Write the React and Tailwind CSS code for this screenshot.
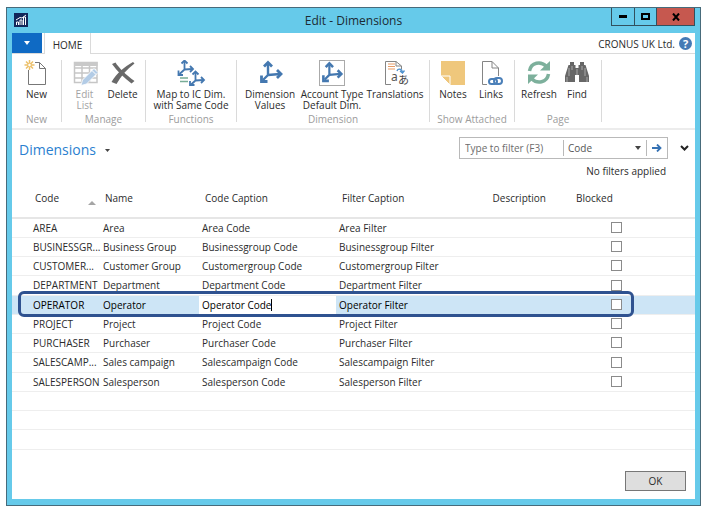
import React from "react";

function Axes({ x = 0, y = 0, scale = 1 }) {
  return (
    <g transform={`translate(${x} ${y}) scale(${scale})`} fill="none" stroke="#4478b0">
      <path d="M8 14V2M8 14L20 13M8 14L3 19" strokeWidth="2.4" />
      <path d="M4 5.500L8 1.500L12 5.500M17 9L21 13L17 17M1.500 14.500V20.500H7.500" strokeWidth="2.8" />
    </g>
  );
}

function Icon({ children, w = 26 }) {
  return (
    <svg width={w} height="26" viewBox={`0 0 ${w} 26`} aria-hidden="true" className="block shrink-0">
      {children}
    </svg>
  );
}

const icons = {
  new: (
    <Icon>
      <path d="M4.500 10V24.500H21.500V8.500L15.500 2.500H11" fill="none" stroke="#777" />
      <path d="M15.500 2.500V8.500H21.500" fill="none" stroke="#777" />
      <path d="M5.500 0V10M.5 5H10.500M2 1.500L9 8.500M9 1.500L2 8.500" stroke="#ecc069" strokeWidth="1.500" />
      <circle cx="5.500" cy="5" r="1.800" fill="#fff" stroke="#ecc069" />
    </Icon>
  ),
  edit: (
    <Icon>
      <path d="M2.500 2.500H25V22.500H2.500ZM2.500 8H25M2.500 13H25M2.500 18H25M10 6V22.500M17.500 6V22.500" fill="none" stroke="#c6c6c6" strokeWidth="1.500" />
      <path d="M2 2H25.500V6H2Z" fill="#c9c9c9" />
      <path d="M9 25.500L10.500 20L22 8.500L26 12.500L14.500 24Z" fill="#b3cce6" stroke="#fff" strokeWidth=".8" />
      <path d="M20 10.500L24 14.500" stroke="#fff" />
    </Icon>
  ),
  delete: (
    <Icon>
      <path d="M2 4L5.500 2.500C9 8 16 15 24.500 21L21.500 23.500C14 18 7 11 2 4Z" fill="#696969" />
      <path d="M23 2L24.500 3.500C17 9 11 16 6.500 24L1.500 22C7 13 14 7 23 2Z" fill="#696969" />
    </Icon>
  ),
  map: (
    <Icon w={32}>
      <g fill="none" stroke="#4478b0" strokeWidth="1.800">
        <path d="M9.500 9.500V1M9.500 9.500L17.500 9M9.500 9.500L4.500 14" />
        <path d="M6.500 3.500L9.500 .5L12.500 3.500M15 6L18 9L15 12M3.500 10.500V15H8" />
        <path d="M20.500 20.500V12M20.500 20.500L28.500 20M20.500 20.500L15.500 25" />
        <path d="M17.500 14.500L20.500 11.500L23.500 14.500M26 17L29 20L26 23M15 21V25H19.500" />
      </g>
      <path d="M5 18H13M5 21.500H13" stroke="#78ad97" strokeWidth="1.500" />
    </Icon>
  ),
  values: <Icon><Axes x={3} y={1} /></Icon>,
  account: (
    <Icon>
      <rect x=".5" y=".5" width="25" height="25" fill="#fff" stroke="#aaa" />
      <Axes x={3} y={2} scale={0.92} />
    </Icon>
  ),
  translations: (
    <Icon w={32}>
      <path d="M12 24.500H6.500V1.500H17L22.500 6V9M17 1.500V6H22.500" fill="none" stroke="#858585" />
      <path d="M9 4H16M9 6.500H16M9 9H16" stroke="#e79b67" strokeWidth="1.200" />
      <path d="M18 11C19 8 23 9 23.500 12M21 11L23.500 13L25.500 10.500" fill="none" stroke="#4d91ce" strokeWidth="1.300" />
      <text x="12" y="21" fontSize="12" fill="#555" className="font-['Noto_Sans',sans-serif]">a</text>
      <text x="19" y="24" fontSize="11" fill="#444" className="font-['Noto_Sans_CJK_JP',sans-serif]">あ</text>
    </Icon>
  ),
  notes: (
    <Icon>
      <path d="M1 1H25V25H10L1 16Z" fill="#efc77c" />
      <path d="M1 16L10 25V16Z" fill="#efc77c" stroke="#fff" />
    </Icon>
  ),
  links: (
    <Icon>
      <path d="M9 24.500H4.500V1.500H14L20.500 8V17M14 1.500V8H20.500" fill="none" stroke="#858585" />
      <g fill="none" stroke="#fff" strokeWidth="4">
        <rect x="11" y="18" width="8" height="6" rx="3" />
        <rect x="16" y="18" width="8" height="6" rx="3" />
      </g>
      <g fill="none" stroke="#4c80b9" strokeWidth="2">
        <rect x="11" y="19" width="8" height="5" rx="2.500" />
        <rect x="16" y="18" width="8" height="6" rx="3" />
      </g>
    </Icon>
  ),
  refresh: (
    <Icon>
      <path d="M3.500 11C5 2 15 1 20 6M22.500 14C21 23 11 24 6 19" fill="none" stroke="#7db09c" strokeWidth="3.500" />
      <path d="M24 1V10.500H14ZM2 24V14.500H12Z" fill="#7db09c" />
    </Icon>
  ),
  find: (
    <Icon>
      <path d="M6 2H10V5H11.500V8H14.500V5H16V2H20V5H21.500L25 16V22H15V15H11V22H1V16L4.500 5H6Z" fill="#676767" />
      <path d="M5 8V16M8 6V10M18 6V10M21 8V16M13 9V15" stroke="#bbb" strokeWidth=".8" />
      <path d="M3 17V22M23 17V22" stroke="#aaa" />
    </Icon>
  ),
};

const groups = [
  { name: "New", width: "w-[50px]", items: [{ icon: "new", lines: ["New"], width: "w-[50px]" }] },
  {
    name: "Manage",
    width: "w-[84px]",
    items: [
      { icon: "edit", lines: ["Edit", "List"], width: "w-[38px]", off: true },
      { icon: "delete", lines: ["Delete"], width: "w-[38px]" },
    ],
  },
  { name: "Functions", width: "w-[91px]", items: [{ icon: "map", lines: ["Map to IC Dim.", "with Same Code"], width: "w-[82px]" }] },
  {
    name: "Dimension",
    width: "w-[193px]",
    items: [
      { icon: "values", lines: ["Dimension", "Values"], width: "w-[60px]" },
      { icon: "account", lines: ["Account Type", "Default Dim."], width: "w-16" },
      { icon: "translations", lines: ["Translations"], width: "w-[62px]" },
    ],
  },
  {
    name: "Show Attached",
    width: "w-[85px]",
    items: [
      { icon: "notes", lines: ["Notes"], width: "w-[38px]" },
      { icon: "links", lines: ["Links"], width: "w-[38px]" },
    ],
  },
  {
    name: "Page",
    width: "w-[87px]",
    items: [
      { icon: "refresh", lines: ["Refresh"], width: "w-[38px]" },
      { icon: "find", lines: ["Find"], width: "w-[38px]" },
    ],
  },
];

const rows = [
  ["AREA", "Area", "Area"],
  ["BUSINESSGR...", "Business Group", "Businessgroup"],
  ["CUSTOMER...", "Customer Group", "Customergroup"],
  ["DEPARTMENT", "Department", "Department"],
  ["OPERATOR", "Operator", "Operator"],
  ["PROJECT", "Project", "Project"],
  ["PURCHASER", "Purchaser", "Purchaser"],
  ["SALESCAMP...", "Sales campaign", "Salescampaign"],
  ["SALESPERSON", "Salesperson", "Salesperson"],
];

function TitleBar() {
  return (
    <header className="flex h-[25px] items-start">
      <div className="flex w-[84px] pt-[5px] pl-[2px]">
        <svg width="14" height="14" viewBox="0 0 14 14" aria-hidden="true">
          <path d="M0 0H14V14H0Z" fill="#12265a" />
          <path d="M2.500 12V9H4.500V12M6 12V7H8V12M9.500 12V4H11.500V12M2 7L6 4.500L8 5L12 2" fill="none" stroke="#fff" />
        </svg>
      </div>
      <h1 className="flex-1 text-center text-[12px] leading-[25px] text-[#1c2b33]">Edit - Dimensions</h1>
      <div className="flex h-[18px] w-[84px] border border-t-0 border-[#31505e]">
        <button type="button" aria-label="Minimize" className="flex w-[23px] items-center justify-center border-r border-[#31505e]">
          <span className="h-[3px] w-2 bg-black" />
        </button>
        <button type="button" aria-label="Maximize" className="flex w-[22px] items-center justify-center border-r border-[#31505e]">
          <span className="h-[7px] w-[9px] border-2 border-black" />
        </button>
        <button type="button" aria-label="Close" className="flex flex-1 items-center justify-center bg-[#c6584f]">
          <svg width="8" height="8" viewBox="0 0 8 8" aria-hidden="true"><path d="M1 .5L7 7.500M7 .5L1 7.500" stroke="#000" strokeWidth="2" /></svg>
        </button>
      </div>
    </header>
  );
}

function Ribbon() {
  return (
    <>
      <nav className="flex h-[21px] border-b border-[#dadada]">
        <button type="button" aria-label="Application menu" className="flex w-[30px] items-center justify-center bg-[#0f6ac4]">
          <svg width="6" height="4" viewBox="0 0 6 4" aria-hidden="true"><path d="M0 0H6L3 4Z" fill="#fff" /></svg>
        </button>
        <button type="button" className="-mb-px ml-0.5 w-[47px] border-x border-[#dadada] bg-white pt-[3px]">HOME</button>
        <div className="ml-auto flex items-center gap-1 pt-px pr-[3px]">
          <span>CRONUS UK Ltd.</span>
          <button type="button" aria-label="Help" className="size-[13px] rounded-full bg-[#457ab5] text-center text-[11px] leading-[13px] font-bold text-white">?</button>
        </div>
      </nav>
      <div className="flex border-b-2 border-[#ececec] py-[6px] whitespace-nowrap">
        {groups.map((g) => (
          <section key={g.name} className={`flex h-[62px] shrink-0 flex-col items-center justify-between border-r border-[#dadada] ${g.width}`}>
            <div className="flex justify-center">
              {g.items.map((it) => (
                <button key={it.icon} type="button" disabled={it.off} className={`flex shrink-0 flex-col items-center leading-[11px] ${it.width} ${it.off ? "text-[#a3a3a3]" : ""}`}>
                  {icons[it.icon]}
                  <span className="pt-[3px]">
                    {it.lines.map((l) => <span key={l} className="block">{l}</span>)}
                  </span>
                </button>
              ))}
            </div>
            <h2 className="leading-[5px] text-[#9c9c9c]">{g.name}</h2>
          </section>
        ))}
      </div>
    </>
  );
}

function FilterBar() {
  return (
    <div className="flex items-start pt-[7px] pr-[6px] pl-[7px]">
      <button type="button" className="flex items-center gap-[9px] text-[14px] leading-[26px] text-[#2b7fd0]">
        Dimensions
        <svg width="5" height="3" viewBox="0 0 5 3" aria-hidden="true"><path d="M0 0H5L2.500 3Z" fill="#444" /></svg>
      </button>
      <div className="ml-auto">
        <div className="flex h-[22px] w-[209px] items-center border border-[#b9b9b9]">
          <input aria-label="Type to filter" placeholder="Type to filter (F3)" className="w-[103px] pl-[5px] outline-none placeholder:text-[#6c6c6c]" />
          <label className="flex h-4 flex-1 items-center border-x border-[#b9b9b9] pr-[5px]">
            <select aria-label="Filter column" className="flex-1 appearance-none bg-transparent pl-1 text-[#555] outline-none">
              <option>Code</option>
              <option>Name</option>
            </select>
            <svg width="6" height="4" viewBox="0 0 6 4" aria-hidden="true"><path d="M0 0H6L3 4Z" fill="#444" /></svg>
          </label>
          <button type="button" aria-label="Apply filter" className="flex w-5 justify-center">
            <svg width="10" height="8" viewBox="0 0 10 8" aria-hidden="true"><path d="M0 4H8M5 .5L8.500 4L5 7.500" fill="none" stroke="#3572b4" strokeWidth="1.800" /></svg>
          </button>
        </div>
        <p className="pt-1 pr-0.5 text-right leading-4">No filters applied</p>
      </div>
      <button type="button" aria-label="Expand filters" className="ml-3 flex h-[22px] items-center">
        <svg width="9" height="6" viewBox="0 0 9 6" aria-hidden="true"><path d="M1 1L4.500 4.500L8 1" fill="none" stroke="#222" strokeWidth="2" /></svg>
      </button>
    </div>
  );
}

function DimensionTable() {
  return (
    <table className="w-full table-fixed border-collapse text-left whitespace-nowrap">
      <colgroup>
        <col className="w-[88px]" />
        <col className="w-[99px]" />
        <col className="w-[137px]" />
        <col className="w-[140px]" />
        <col className="w-[80px]" />
        <col />
      </colgroup>
      <thead>
        <tr className="h-[39px] border-b-2 border-[#e6e6e6]">
          <th className="pr-1 pl-[23px] font-normal">
            <span className="flex items-end justify-between">
              Code
              <svg width="8" height="4" viewBox="0 0 8 4" aria-hidden="true"><path d="M0 4L4 0L8 4Z" fill="#a5a5a5" /></svg>
            </span>
          </th>
          <th className="pl-[5px] font-normal">Name</th>
          <th className="pl-[6px] font-normal">Code Caption</th>
          <th className="pl-[6px] font-normal">Filter Caption</th>
          <th className="pr-[10px] text-right font-normal">Description</th>
          <th className="pl-5 font-normal">Blocked</th>
        </tr>
      </thead>
      <tbody>
        {rows.map(([code, name, stem]) => {
          const current = code === "OPERATOR";
          return (
            <tr key={code} className={`relative h-[19px] border-b border-[#eeeeee] nth-[4n]:h-5 ${current ? "bg-[#cde5f6] text-black" : ""}`}>
              <td className="pl-[21px]">
                {code}
                {current && <span className="pointer-events-none absolute -inset-y-1 right-[61px] left-[6px] z-10 rounded-[6px] border-3 border-[#2f5290]" />}
              </td>
              <td className="pl-[3px]">{name}</td>
              <td className={`pl-[3px] ${current ? "bg-white" : ""}`}>
                {current ? (
                  <span className="flex items-center">
                    <input aria-label="Code Caption" defaultValue="Operator Code" className="field-sizing-content h-[14px] outline-none" />
                    <span className="h-3 w-px bg-black" />
                  </span>
                ) : (
                  `${stem} Code`
                )}
              </td>
              <td className="pl-[3px]">{stem} Filter</td>
              <td />
              <td className="pl-[55px]">
                <input type="checkbox" aria-label={`${name} blocked`} className="block size-[11px] appearance-none border border-[#8b8b8b] bg-white" />
              </td>
            </tr>
          );
        })}
        {[1, 2, 3].map((n) => (
          <tr key={n} className="h-[19px] border-b border-[#eeeeee] nth-[4n]:h-5"><td colSpan={6} /></tr>
        ))}
      </tbody>
    </table>
  );
}

export default function App() {
  return (
    <div className="min-h-screen bg-white pt-[7px] pr-[13px] pb-[13px] pl-[6px] font-['Open_Sans','Noto_Sans',sans-serif] text-[10px] leading-[14px] text-[#2b2b2b]">
      <main className="border border-[#476b7b] bg-[#66caea] px-[5px] pb-[6px]">
        <TitleBar />
        <div className="bg-white">
          <Ribbon />
          <FilterBar />
          <DimensionTable />
          <div className="flex justify-end px-[9px] pt-[21px] pb-2">
            <button type="button" className="h-5 w-[61px] border border-[#777] bg-[#dedede]">OK</button>
          </div>
        </div>
      </main>
    </div>
  );
}
